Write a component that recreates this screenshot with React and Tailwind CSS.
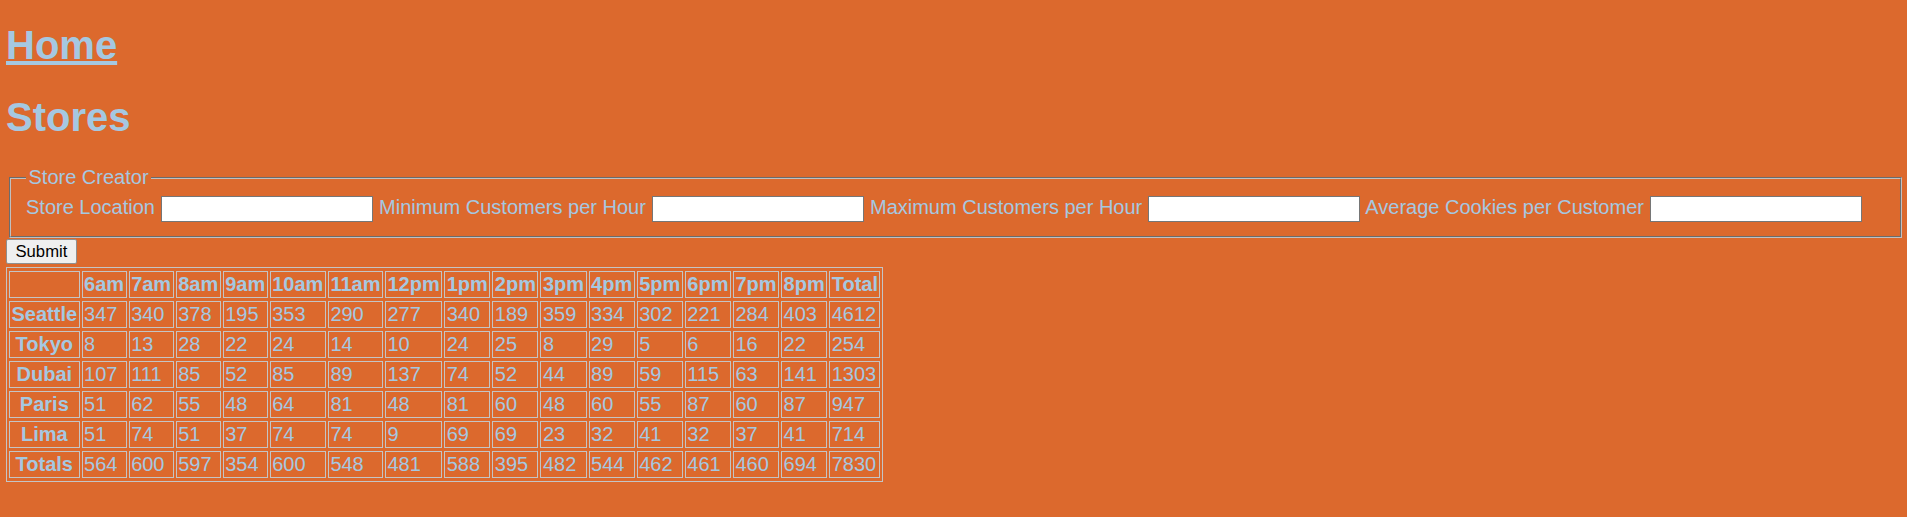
import React from "react";

const hours = ["6am", "7am", "8am", "9am", "10am", "11am", "12pm", "1pm", "2pm", "3pm", "4pm", "5pm", "6pm", "7pm", "8pm"];

const rows = [
  ["Seattle", [347, 340, 378, 195, 353, 290, 277, 340, 189, 359, 334, 302, 221, 284, 403], 4612],
  ["Tokyo", [8, 13, 28, 22, 24, 14, 10, 24, 25, 8, 29, 5, 6, 16, 22], 254],
  ["Dubai", [107, 111, 85, 52, 85, 89, 137, 74, 52, 44, 89, 59, 115, 63, 141], 1303],
  ["Paris", [51, 62, 55, 48, 64, 81, 48, 81, 60, 48, 60, 55, 87, 60, 87], 947],
  ["Lima", [51, 74, 51, 37, 74, 74, 9, 69, 69, 23, 32, 41, 32, 37, 41], 714],
  ["Totals", [564, 600, 597, 354, 600, 548, 481, 588, 395, 482, 544, 462, 461, 460, 694], 7830],
];

function Field({ label }) {
  return (
    <>
      {label}{" "}
      <input
        type="text"
        className="inline-block align-baseline mx-[0.5px] w-[212px] h-[26px] bg-white border border-[#767676] px-[2px] py-[2px] text-[16.67px] leading-normal text-black outline-none"
      />{" "}
    </>
  );
}

export default function App() {
  const cell = "border border-[#c4c4c4] px-[1.5px] py-[1px] leading-[23px]";
  return (
    <div
      className="min-h-[517px] w-full bg-[#dc692d] text-[#a5c8e1] text-[20px] pl-[6px] pt-[22px]"
      style={{ fontFamily: '"Liberation Sans", Arial, sans-serif' }}
    >
      <h1 className="text-[40px] leading-[46px] font-bold">
        <a href="#" className="underline">Home</a>
      </h1>
      <h1 className="mt-[26px] text-[40px] leading-[46px] font-bold">Stores</h1>
      <form>
        <fieldset className="mt-[26px] ml-[3px] w-[1893px] border-2 [border-style:groove] border-[#c0c0c0] px-[15px] pt-[7px] pb-[14px]">
          <legend className="px-[2.5px] leading-[23px]">Store Creator</legend>
          <div className="leading-[23px] whitespace-nowrap">
            <Field label="Store Location" />
            <Field label="Minimum Customers per Hour" />
            <Field label="Maximum Customers per Hour" />
            <Field label="Average Cookies per Customer" />
          </div>
        </fieldset>
        <button
          type="button"
          className="block mt-[1px] h-[25px] px-[8.5px] bg-[#efefef] border border-[#8f8f8f] rounded-[2px] text-black text-[16.67px] leading-[19px]"
        >
          Submit
        </button>
      </form>
      <table className="mt-[2.5px] border-separate border-spacing-x-[2.5px] border-spacing-y-[3px] border border-[#c4c4c4]">
        <thead>
          <tr>
            <th className={cell}></th>
            {hours.map((h) => (
              <th key={h} className={`${cell} font-bold text-center`}>{h}</th>
            ))}
            <th className={`${cell} font-bold text-center`}>Total</th>
          </tr>
        </thead>
        <tbody>
          {rows.map(([name, vals, total]) => (
            <tr key={name}>
              <th className={`${cell} font-bold text-center`}>{name}</th>
              {vals.map((v, i) => (
                <td key={i} className={`${cell} text-left`}>{v}</td>
              ))}
              <td className={`${cell} text-left`}>{total}</td>
            </tr>
          ))}
        </tbody>
      </table>
    </div>
  );
}
